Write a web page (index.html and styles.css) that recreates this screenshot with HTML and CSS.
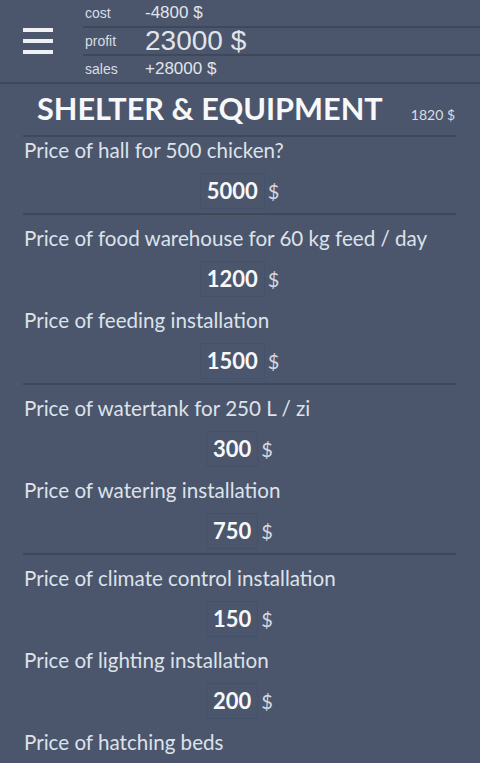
FILE: index.html
```html
<!DOCTYPE html>
<html lang="en">
  <head>
    <meta charset="UTF-8" />
    <meta name="viewport" content="width=device-width, initial-scale=1.0" />
    <link rel="stylesheet" href="styles.css">
  </head>
  <body>
    <div class="header">
      <div class="menu">
        <div class="menu-icon">
          <span></span>
          <span></span>
          <span></span>
        </div>
      </div>
      <div class="stats">
        <div class="stat-row">
          <span class="stat-label">cost</span>
          <span class="stat-value">-4800 $</span>
        </div>
        <div class="stat-row">
          <span class="stat-label">profit</span>
          <span class="stat-value big">23000 $</span>
        </div>
        <div class="stat-row">
          <span class="stat-label">sales</span>
          <span class="stat-value">+28000 $</span>
        </div>
      </div>
    </div>
    <main>
      <div class="section-title">
        <h1>SHELTER &amp; EQUIPMENT</h1>
        <span class="section-total">1820 $</span>
      </div>

      <div class="group first">
        <div class="question">
          <div class="q-text">Price of hall for 500 chicken?</div>
          <div class="q-answer"><span class="q-box">5000</span><span class="q-unit">$</span></div>
        </div>
      </div>

      <div class="group">
        <div class="question">
          <div class="q-text">Price of food warehouse for 60 kg feed / day</div>
          <div class="q-answer"><span class="q-box">1200</span><span class="q-unit">$</span></div>
        </div>
        <div class="question">
          <div class="q-text">Price of feeding installation</div>
          <div class="q-answer"><span class="q-box">1500</span><span class="q-unit">$</span></div>
        </div>
      </div>

      <div class="group">
        <div class="question">
          <div class="q-text">Price of watertank for 250 L / zi</div>
          <div class="q-answer"><span class="q-box">300</span><span class="q-unit">$</span></div>
        </div>
        <div class="question">
          <div class="q-text">Price of watering installation</div>
          <div class="q-answer"><span class="q-box">750</span><span class="q-unit">$</span></div>
        </div>
      </div>

      <div class="group last">
        <div class="question">
          <div class="q-text">Price of climate control installation</div>
          <div class="q-answer"><span class="q-box">150</span><span class="q-unit">$</span></div>
        </div>
        <div class="question">
          <div class="q-text">Price of lighting installation</div>
          <div class="q-answer"><span class="q-box">200</span><span class="q-unit">$</span></div>
        </div>
        <div class="question">
          <div class="q-text">Price of hatching beds</div>
        </div>
      </div>
    </main>
  </body>
</html>
```

FILE: styles.css
```css
body {
  margin: 0;
  padding: 0;
  background-color: #4b566c;
  color: #dde2ea;
  font-family: Lato, "Open Sans", sans-serif;
  overflow: hidden;
}
.header {
  display: flex;
  border-bottom: 2px solid #3e485b;
  font-family: "Liberation Sans", Arial, sans-serif;
}
.menu {
  width: 83px;
  display: flex;
  align-items: center;
  padding-left: 23px;
  box-sizing: border-box;
}
.menu-icon {
  display: flex;
  flex-direction: column;
  gap: 7px;
}
.menu-icon span {
  display: block;
  width: 30px;
  height: 4px;
  background-color: #eef0f3;
}
.stats {
  flex: 1;
}
.stat-row {
  display: flex;
  align-items: center;
  height: 26px;
  padding-left: 2px;
  border-bottom: 2px solid #3e485b;
}
.stat-row:last-child {
  border-bottom: none;
}
.stat-label {
  width: 60px;
  font-size: 14px;
  color: #d9dde4;
}
.stat-value {
  font-size: 17px;
  color: #e1e4ea;
}
.stat-value.big {
  font-size: 28px;
}
main {
  padding: 0 24px 0 23px;
}
.section-title {
  display: flex;
  align-items: baseline;
  justify-content: space-between;
  padding: 6px 1px 0 14px;
  height: 45px;
  border-bottom: 2px solid #3e485b;
}
.section-title h1 {
  margin: 0;
  font-size: 30.7px;
  font-weight: bold;
  color: #f7f8fa;
}
.section-total {
  font-size: 14px;
  color: #d9dde4;
}
.group {
  padding-bottom: 4px;
  border-bottom: 2px solid #3e485b;
}
.group.last {
  border-bottom: none;
}
.question {
  padding-top: 11px;
}
.group.first .question {
  padding-top: 1px;
}
.q-text {
  padding-left: 1px;
  font-size: 20.6px;
  line-height: 24px;
}
.q-answer {
  display: flex;
  justify-content: center;
  align-items: center;
  margin-top: 11px;
}
.q-box {
  border: 1px solid #42526c;
  padding: 0 6px;
  height: 34px;
  line-height: 34px;
  font-size: 22px;
  font-weight: bold;
  color: #f7f8fa;
}
.q-unit {
  margin-left: 3px;
  font-size: 20px;
  color: #d3d8e0;
}
```
